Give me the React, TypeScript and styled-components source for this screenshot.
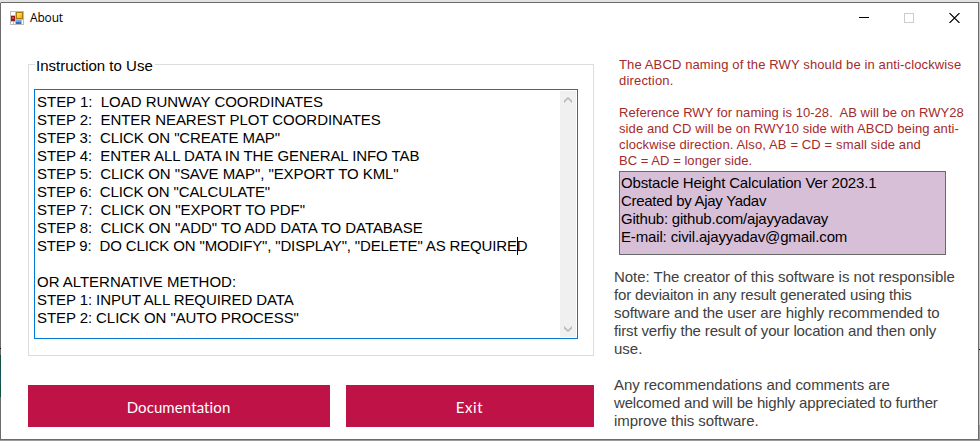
import React from "react";
import styled, { createGlobalStyle } from "styled-components";

type TextLine = [text: string, tracking?: number];

const GlobalStyle = createGlobalStyle`
  * { box-sizing: border-box; }
  body {
    margin: 0;
    overflow: hidden;
    background: #9a9a9a;
    font-family: "Liberation Sans", Arial, sans-serif;
  }
`;

const Desktop = styled.div`
  width: 980px;
  height: 441px;
  padding: 2px 1px 1px 0;
  background: linear-gradient(#e3e3e3 0 2px, #c4c4c4 2px 349px, #111 349px 350px, #c4c4c4 350px 425px, #9a9a9a 425px);
`;

const Window = styled.main`
  display: flex;
  flex-direction: column;
  height: 438px;
  border: 1px solid #6b6b6b;
  border-left-color: transparent;
  background:
    linear-gradient(#6b6b6b 0 346px, #111 346px 347px, #6b6b6b 347px 353px, #14523a 353px 368px, #17505a 368px 382px, #14523a 382px 395px, #6b6b6b 395px)
      0 0 / 1px 100% no-repeat border-box,
    #fff;
`;

const TitleBar = styled.header`
  display: flex;
  align-items: center;
  height: 29px;
  padding-left: 9px;
`;

const Title = styled.h1`
  flex: 1;
  margin: 1px 0 0 6px;
  font: 12px/16px "Open Sans", "Noto Sans", sans-serif;
  letter-spacing: -0.16px;
  color: #000;
`;

const WindowControls = styled.div`
  display: flex;
  gap: 35px;
  padding-right: 18px;
`;

const Content = styled.div`
  display: flex;
  gap: 20px;
  padding: 23px 0 0 27px;
`;

const LeftColumn = styled.section`
  display: flex;
  flex-direction: column;
  width: 566px;
`;

const Instructions = styled.fieldset`
  height: 301px;
  margin: 0;
  padding: 16px 15px 0 5px;
  border: 1px solid #dcdcdc;
  min-width: 0;
`;

const Legend = styled.legend`
  height: 18px;
  margin-left: 1px;
  padding: 2px 2px 0 1px;
  font-size: 15px;
  line-height: 18px;
`;

const TextArea = styled.div`
  display: flex;
  justify-content: space-between;
  width: 544px;
  height: 250px;
  padding: 1px;
  border: 1px solid #0078d7;
  background: #fff;
`;

const StepList = styled.div`
  padding: 2px 0 0 1px;
`;

const ScrollBar = styled.div`
  display: flex;
  flex-direction: column;
  justify-content: space-between;
  align-items: center;
  width: 16px;
  padding: 6px 0 5px;
  background: #f0f0f0;
`;

const Line = styled.div<{ $size: number; $leading: number; $tracking: number }>`
  height: ${(p) => p.$leading}px;
  font-size: ${(p) => p.$size}px;
  line-height: ${(p) => p.$leading}px;
  letter-spacing: ${(p) => p.$tracking}px;
  white-space: pre;
`;

const Caret = styled.span`
  display: inline-block;
  width: 1px;
  height: 18px;
  margin: 0 -1px 0 0;
  vertical-align: top;
  background: #000;
`;

const Buttons = styled.div`
  display: grid;
  grid-template-columns: 302px 248px;
  gap: 16px;
  margin-top: 29px;
`;

const ActionButton = styled.button<{ $tracking: number }>`
  height: 42px;
  padding: 1px 1px 0 0;
  border: 0;
  background: #bf1246;
  color: #fff;
  font: 15px/20px Lato, sans-serif;
  letter-spacing: ${(p) => p.$tracking}px;
`;

const RightColumn = styled.section`
  flex: 1;
  padding-top: 2px;
`;

const NamingNote = styled.div`
  height: 114px;
  padding-left: 5px;
  color: #a52a2a;
`;

const Credits = styled.div`
  width: 327px;
  height: 84px;
  margin-left: 5px;
  padding: 2px 1px;
  border: 1px solid #696969;
  background: #d8bfd8;
  color: #000;
`;

const Disclaimer = styled.div`
  margin-top: 13px;
  color: #404040;
`;

const steps: TextLine[] = [
  ["STEP 1:  LOAD RUNWAY COORDINATES", -0.02],
  ["STEP 2:  ENTER NEAREST PLOT COORDINATES", -0.05],
  ['STEP 3:  CLICK ON "CREATE MAP"', -0.1],
  ["STEP 4:  ENTER ALL DATA IN THE GENERAL INFO TAB", -0.07],
  ['STEP 5:  CLICK ON "SAVE MAP", "EXPORT TO KML"', -0.07],
  ['STEP 6:  CLICK ON "CALCULATE"', -0.13],
  ['STEP 7:  CLICK ON "EXPORT TO PDF"', -0.04],
  ['STEP 8:  CLICK ON "ADD" TO ADD DATA TO DATABASE', -0.055],
  ['STEP 9:  DO CLICK ON "MODIFY", "DISPLAY", "DELETE" AS REQUIRE|D', -0.15],
  [""],
  ["OR ALTERNATIVE METHOD:", -0.02],
  ["STEP 1: INPUT ALL REQUIRED DATA", -0.08],
  ['STEP 2: CLICK ON "AUTO PROCESS"', -0.08],
];

const naming: TextLine[] = [
  ["The ABCD naming of the RWY should be in anti-clockwise", 0.125],
  ["direction.", 0.175],
  [""],
  ["Reference RWY for naming is 10-28.  AB will be on RWY28", 0.055],
  ["side and CD will be on RWY10 side with ABCD being anti-", 0.09],
  ["clockwise direction. Also, AB = CD = small side and", 0.125],
  ["BC = AD = longer side.", 0.04],
];

const credits: TextLine[] = [
  ["Obstacle Height Calculation Ver 2023.1", -0.17],
  ["Created by Ajay Yadav", -0.29],
  ["Github: github.com/ajayyadavay", -0.21],
  ["E-mail: civil.ajayyadav@gmail.com", -0.15],
];

const disclaimer: TextLine[] = [
  ["Note: The creator of this software is not responsible", -0.03],
  ["for deviaiton in any result generated using this", -0.175],
  ["software and the user are highly recommended to", -0.1],
  ["first verfiy the result of your location and then only", -0.15],
  ["use.", 0],
  [""],
  ["Any recommendations and comments are", -0.05],
  ["welcomed and will be highly appreciated to further", -0.18],
  ["improve this software.", -0.06],
];

function Lines({ lines, size = 15, leading = 18 }: { lines: TextLine[]; size?: number; leading?: number }) {
  return (
    <>
      {lines.map(([text, tracking = 0], i) => {
        const [before, after] = text.split("|");
        return (
          <Line key={i} $size={size} $leading={leading} $tracking={tracking}>
            {before}
            {after !== undefined && <Caret />}
            {after}
          </Line>
        );
      })}
    </>
  );
}

function FormIcon() {
  return (
    <svg width="14" height="14" viewBox="0 0 14 14" shapeRendering="crispEdges" aria-hidden>
      <defs>
        <linearGradient id="gold" x2="1" y2="1">
          <stop stopColor="#ffe58a" />
          <stop offset="1" stopColor="#f2ae00" />
        </linearGradient>
      </defs>
      <path fill="#bdbdbd" d="M0 0h14v14H0z" />
      <path fill="#fff" d="M1 1h4v3H1zM1 11h2v2H1zM4 11h1v2H4zM12 9h1v4h-1z" />
      <path fill="#8e1c14" d="M1 5h4v5H1z" />
      <path fill="#d44a3c" d="M2 6h2v2H2z" />
      <path fill="#a87a08" d="M6 1h7v7H6z" />
      <path fill="url(#gold)" d="M7 2h5v5H7z" />
      <path fill="#3469c4" d="M6 9h5v4H6z" />
      <path fill="#78a7f0" d="M6 9h5v2H6z" />
    </svg>
  );
}

function ScrollArrow({ down = false }: { down?: boolean }) {
  return (
    <svg width="8" height="6" viewBox="0 0 8 6" aria-hidden>
      <path
        d={down ? "M0 0 4 4 8 0V2.4L4 6 0 2.4Z" : "M0 6 4 2 8 6V3.6L4 0 0 3.6Z"}
        fill="#b8b8b8"
      />
    </svg>
  );
}

export default function App() {
  return (
    <Desktop>
      <GlobalStyle />
      <Window>
        <TitleBar>
          <FormIcon />
          <Title>About</Title>
          <WindowControls>
            <svg width="10" height="10" shapeRendering="crispEdges">
              <path d="M0 4.5h10" stroke="#000" />
            </svg>
            <svg width="10" height="10" shapeRendering="crispEdges">
              <path d="M.5.5h9v9h-9z" fill="none" stroke="#ccc" />
            </svg>
            <svg width="11" height="10">
              <path d="m.5 0 10 10m0-10-10 10" stroke="#000" strokeWidth="1.1" />
            </svg>
          </WindowControls>
        </TitleBar>
        <Content>
          <LeftColumn>
            <Instructions>
              <Legend>Instruction to Use</Legend>
              <TextArea>
                <StepList>
                  <Lines lines={steps} />
                </StepList>
                <ScrollBar>
                  <ScrollArrow />
                  <ScrollArrow down />
                </ScrollBar>
              </TextArea>
            </Instructions>
            <Buttons>
              <ActionButton $tracking={0.1}>Documentation</ActionButton>
              <ActionButton $tracking={0.6}>Exit</ActionButton>
            </Buttons>
          </LeftColumn>
          <RightColumn>
            <NamingNote>
              <Lines lines={naming} size={13} leading={16} />
            </NamingNote>
            <Credits>
              <Lines lines={credits} />
            </Credits>
            <Disclaimer>
              <Lines lines={disclaimer} />
            </Disclaimer>
          </RightColumn>
        </Content>
      </Window>
    </Desktop>
  );
}
